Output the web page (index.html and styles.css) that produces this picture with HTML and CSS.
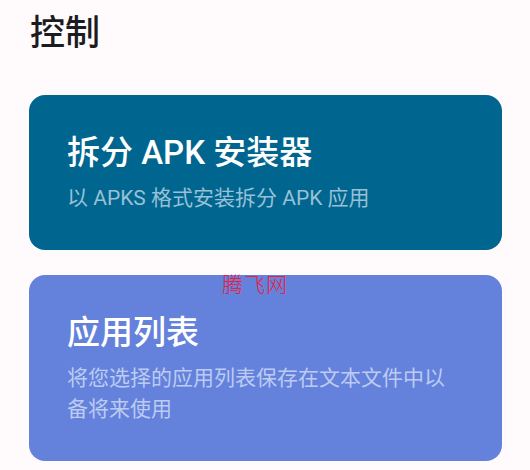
FILE: index.html
```html
<!DOCTYPE html>
<html lang="zh-CN">
<head>
<meta charset="utf-8">
<title>控制</title>
<link rel="stylesheet" href="styles.css">
</head>
<body>
<main class="page">
  <h1 class="section-title">控制</h1>
  <section class="card card-primary">
    <h2 class="card-title">拆分 APK 安装器</h2>
    <p class="card-sub">以 APKS 格式安装拆分 APK 应用</p>
  </section>
  <section class="card card-secondary">
    <h2 class="card-title">应用列表</h2>
    <p class="card-sub">将您选择的应用列表保存在文本文件中以备将来使用</p>
    <span class="watermark">腾飞网</span>
  </section>
</main>
</body>
</html>
```

FILE: styles.css
```css
html, body {
  margin: 0;
  padding: 0;
  background: #fffbfd;
}
body {
  font-family: Roboto, "Noto Sans CJK SC", sans-serif;
  width: 530px;
  height: 470px;
  overflow: hidden;
}
.page {
  display: flex;
  flex-direction: column;
  padding: 10px 28px 0 29px;
  gap: 25px;
}
.section-title {
  margin: 0 0 12px 1px;
  font-size: 35px;
  line-height: 48px;
  font-weight: 500;
  color: #1c1b1f;
}
.card {
  position: relative;
  border-radius: 16px;
  padding: 38px 38px 36px 38px;
  display: flex;
  flex-direction: column;
  gap: 10px;
}
.card-primary {
  background: #00668f;
}
.card-secondary {
  background: #6482dc;
}
.card-title {
  margin: 0;
  font-size: 33px;
  line-height: 40px;
  font-weight: 500;
  color: #ffffff;
}
.card-sub {
  margin: 0;
  font-size: 21px;
  line-height: 31px;
  font-weight: 400;
  max-width: 385px;
}
.card-primary .card-sub {
  color: #98c0d6;
}
.card-secondary .card-sub {
  color: #bccbf2;
}
.watermark {
  position: absolute;
  left: 193px;
  top: -4px;
  font-family: "Noto Sans CJK SC", sans-serif;
  font-weight: 300;
  font-size: 21px;
  line-height: 24px;
  color: #e8203e;
  letter-spacing: 1px;
}
```
